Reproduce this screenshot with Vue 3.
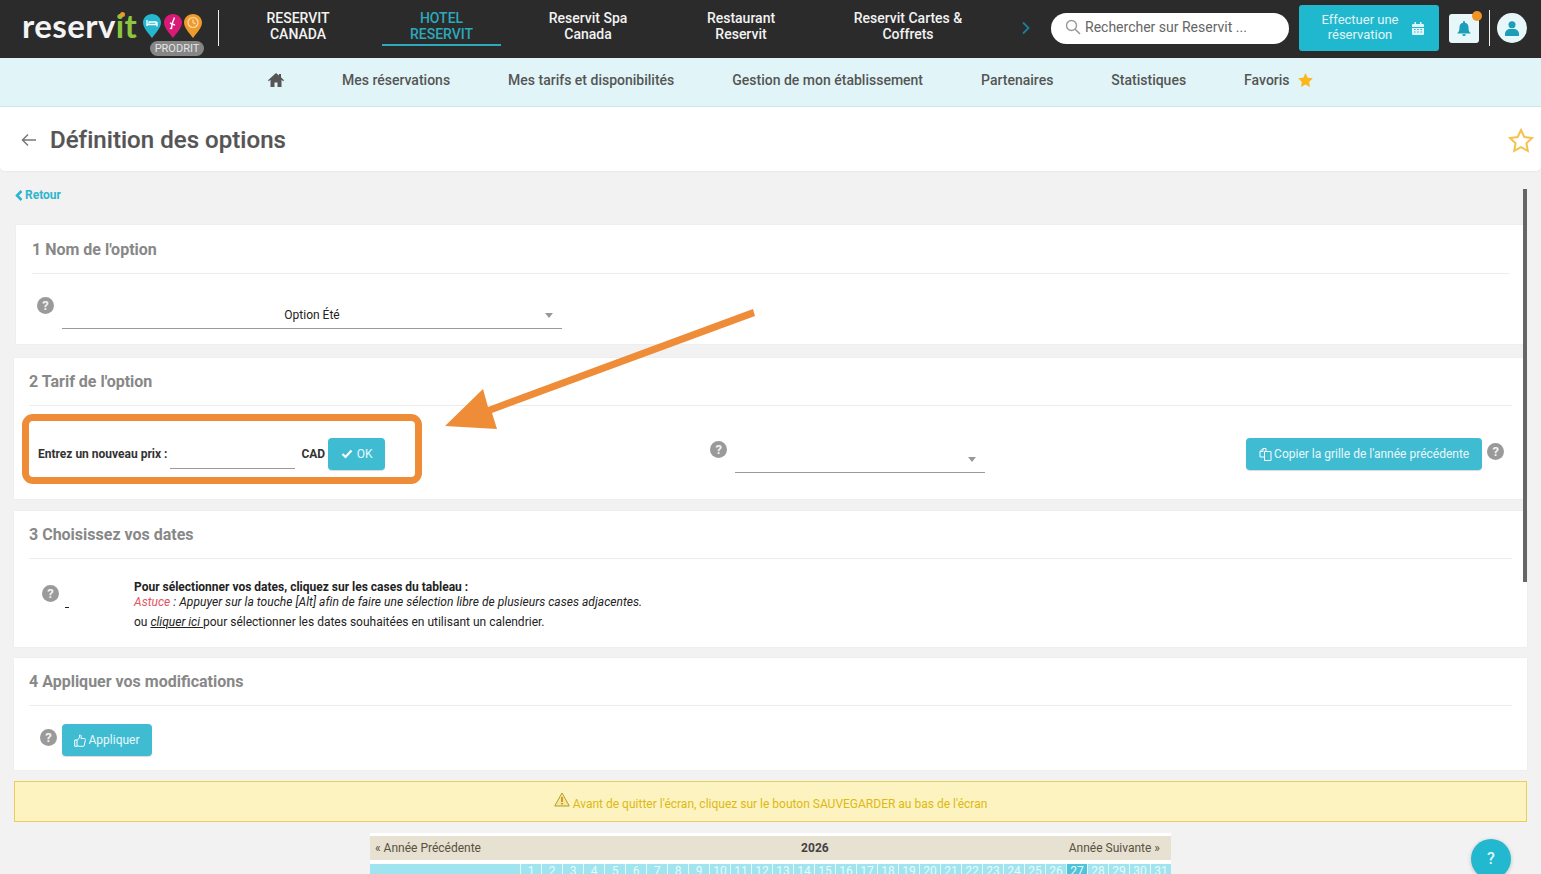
<script setup>
const topItems = [
  { lines: ['RESERVIT', 'CANADA'], w: 120 },
  { lines: ['HOTEL', 'RESERVIT'], w: 119, active: true },
  { lines: ['Reservit Spa', 'Canada'], w: 126 },
  { lines: ['Restaurant', 'Reservit'], w: 132 },
  { lines: ['Reservit Cartes &', 'Coffrets'], w: 154 },
]
const subItems = ['Mes réservations', 'Mes tarifs et disponibilités', 'Gestion de mon établissement', 'Partenaires', 'Statistiques']
const days = Array.from({ length: 31 }, (_, i) => i + 1)
const pin = 'M9 0C4 0 0 3.8 0 8.6C0 14 5.6 19.4 9 24C12.4 19.4 18 14 18 8.6C18 3.8 14 0 9 0Z'
</script>

<template>
  <div class="page">
    <header class="top">
      <div class="logo">
        <span class="word">reserv<span class="it">it</span></span>
        <span class="idot"></span>
        <div class="pins">
          <svg width="18" height="24" viewBox="0 0 18 24"><path :d="pin" fill="#25b7cf"/><path d="M4 6v6M4 10.500h10M14 8v4.500M6 9.500V8h7v2" stroke="#fff" stroke-width="1.300" fill="none"/></svg>
          <svg width="18" height="24" viewBox="0 0 18 24"><path :d="pin" fill="#d91a76"/><path d="M10.500 3.500L8 10l-2-1M8 10l-.5 5M8 10l3 1M7.500 15L6 14" stroke="#fff" stroke-width="1.400" fill="none"/></svg>
          <svg width="18" height="24" viewBox="0 0 18 24"><path :d="pin" fill="#ef9a2d"/><circle cx="9" cy="8.500" r="5" stroke="#fbdcae" stroke-width="1.200" fill="none"/><path d="M9 5.500v3l2.500 1.500" stroke="#fbdcae" stroke-width="1.200" fill="none"/></svg>
        </div>
        <span class="pill">PRODRIT</span>
      </div>
      <span class="vline"></span>
      <nav class="topnav">
        <a v-for="item in topItems" :key="item.lines[0]" class="topitem" :class="{ active: item.active }" :style="{ width: item.w + 'px' }">
          <span v-for="l in item.lines" :key="l">{{ l }}</span>
        </a>
      </nav>
      <svg class="chev" width="10" height="14" viewBox="0 0 10 14"><path d="M2 1.500L7.500 7L2 12.500" stroke="#1f7f9b" stroke-width="1.800" fill="none"/></svg>
      <div class="search">
        <svg width="16" height="16" viewBox="0 0 16 16"><circle cx="6.500" cy="6.500" r="5" stroke="#999" stroke-width="1.400" fill="none"/><path d="M10.200 10.200L15 15" stroke="#999" stroke-width="1.600"/></svg>
        <span>Rechercher sur Reservit ...</span>
      </div>
      <button class="book">
        <span class="booktext">Effectuer une<br>réservation</span>
        <svg width="12" height="13" viewBox="0 0 12 13"><path d="M1 2h10a1 1 0 0 1 1 1v2H0V3a1 1 0 0 1 1-1zM0 6h12v6a1 1 0 0 1-1 1H1a1 1 0 0 1-1-1zM2.500 0h1.500v3H2.500zM8 0h1.500v3H8z" fill="#e1f5f8"/><path d="M2 7.500h1.500M5.200 7.500h1.500M8.500 7.500H10M2 10h1.500M5.200 10h1.500M8.500 10H10" stroke="#20b8ce" stroke-width="1.200"/></svg>
      </button>
      <div class="bell">
        <svg width="14" height="15" viewBox="0 0 14 15"><path d="M7 0a1 1 0 0 1 1 1v.7A4.500 4.500 0 0 1 11.500 6c0 4 1 5 2 6v.5H.5V12c1-1 2-2 2-6A4.500 4.500 0 0 1 6 1.700V1a1 1 0 0 1 1-1zM5.200 13.300h3.600a1.800 1.800 0 0 1-3.600 0z" fill="#1c9db8"/></svg>
        <span class="dot"></span>
      </div>
      <span class="vline second"></span>
      <div class="avatar">
        <svg width="14" height="15" viewBox="0 0 14 15"><circle cx="7" cy="3.800" r="3.500" fill="#1c9db8"/><path d="M0 15v-2c0-3 2.500-5 5-5h4c2.500 0 5 2 5 5v2z" fill="#1c9db8"/></svg>
      </div>
    </header>

    <nav class="subnav">
      <svg width="16" height="14" viewBox="0 0 16 14"><path d="M8 0L0 7.200l.9 1L2.500 6.800V14h4V9.500h3V14h4V6.800l1.600 1.400.9-1L13 4.300V1h-2v1.500z" fill="#555"/></svg>
      <a v-for="s in subItems" :key="s">{{ s }}</a>
      <a class="fav">Favoris
        <svg width="15" height="14" viewBox="0 0 24 23"><path d="M12 0l3.700 7.600 8.300 1.200-6 5.800 1.400 8.300L12 19l-7.400 3.900L6 14.600 0 8.800l8.300-1.200z" fill="#fbb81c"/></svg>
      </a>
    </nav>

    <div class="titlebar">
      <svg width="16" height="14" viewBox="0 0 16 14"><path d="M15 7H2M7 1.500L1.500 7L7 12.500" stroke="#777" stroke-width="1.500" fill="none"/></svg>
      <h1>Définition des options</h1>
      <svg class="bigstar" width="26" height="25" viewBox="0 0 26 25"><path d="M13 2l3.300 7 7.700 1-5.600 5.300 1.400 7.600L13 19.200l-6.800 3.700 1.400-7.600L2 10l7.700-1z" stroke="#f6c24e" stroke-width="2" fill="none"/></svg>
    </div>

    <main class="content">
      <a class="back">
        <svg width="8" height="11" viewBox="0 0 8 11"><path d="M6.500 1L2 5.500l4.500 4.500" stroke="#25b7cf" stroke-width="2.500" fill="none"/></svg>
        Retour
      </a>

      <section class="card c1">
        <h2>1 Nom de l'option</h2>
        <div class="row r1">
          <span class="help">?</span>
          <div class="select s1"><span>Option Été</span><i class="caret"></i></div>
        </div>
      </section>

      <section class="card c2">
        <h2>2 Tarif de l'option</h2>
        <div class="row r2">
          <b class="lbl">Entrez un nouveau prix :</b>
          <span class="price"></span>
          <b class="cad">CAD</b>
          <button class="btn ok">
            <svg width="12" height="10" viewBox="0 0 12 10"><path d="M1.500 5l3 3 6-6.500" stroke="#fff" stroke-width="2.200" fill="none"/></svg>
            OK
          </button>
          <span class="help h2a">?</span>
          <div class="select s2"><i class="caret"></i></div>
          <button class="btn copy">
            <svg width="13" height="13" viewBox="0 0 13 13"><path d="M5.500 3.500h6.500v9H5.500zM5.500 9H1V3.500L4 .5h3v3M4 .5v3H1" stroke="#fff" stroke-width="1" fill="none"/></svg>
            Copier la grille de l'année précédente
          </button>
          <span class="help h2b">?</span>
        </div>
      </section>

      <section class="card c3">
        <h2>3 Choisissez vos dates</h2>
        <div class="row r3">
          <span class="help">?</span>
          <span class="mini"></span>
          <div class="howto">
            <b>Pour sélectionner vos dates, cliquez sur les cases du tableau :</b>
            <em class="tip"><span class="astuce">Astuce</span> : Appuyer sur la touche [Alt] afin de faire une sélection libre de plusieurs cases adjacentes.</em>
            <p>ou <em><u>cliquer ici </u></em>pour sélectionner les dates souhaitées en utilisant un calendrier.</p>
          </div>
        </div>
      </section>

      <section class="card c4">
        <h2>4 Appliquer vos modifications</h2>
        <div class="row r4">
          <span class="help">?</span>
          <button class="btn apply">
            <svg width="12" height="13" viewBox="0 0 12 13"><path d="M.7 6h2.300v6.300H.7zM3 6.500L5.500 3.500V1c1.500-.5 2 1 1.500 3.500h3.500c1 0 1 1 .8 1.800l-1 5c-.2.700-.6 1-1.300 1H5c-1 0-1.500-.5-2-.8" stroke="#fff" stroke-width="1" fill="none"/></svg>
            Appliquer
          </button>
        </div>
      </section>

      <div class="alert">
        <svg width="16" height="15" viewBox="0 0 16 15"><path d="M8 1L15.300 14H.7z" stroke="#b59a2a" stroke-width="1" fill="#f6e7a0"/><path d="M8 5v5M8 11v1.600" stroke="#d88f1a" stroke-width="1.800"/></svg>
        <span>Avant de quitter l'écran, cliquez sur le bouton SAUVEGARDER au bas de l'écran</span>
      </div>

      <div class="calendar">
        <div class="calhead">
          <span>« Année Précédente</span>
          <b>2026</b>
          <span>Année Suivante »</span>
        </div>
        <div class="calrow">
          <span class="callabel"></span>
          <span v-for="d in days" :key="d" class="day" :class="{ today: d === 27 }">{{ d }}</span>
        </div>
      </div>
    </main>

    <div class="focusbox"></div>
    <svg class="arrow" width="320" height="125" viewBox="0 0 320 125"><path d="M310 1L312 8L49 105L54 121L2 118L40 81L45 99Z" fill="#ee8c38"/></svg>
    <span class="scroll"></span>
    <span class="fab">?</span>
  </div>
</template>

<style>
html, body { margin: 0; overflow: hidden; }
</style>

<style scoped>
.page { position: relative; width: 1541px; height: 874px; overflow: hidden; background: #f2f2f2; font-family: Roboto, "Liberation Sans", sans-serif; color: #333; }
.top { height: 58px; background: #2b2b2b; display: flex; align-items: center; position: relative; }
.logo { position: relative; width: 218px; height: 58px; flex: none; }
.word { position: absolute; left: 22px; top: 3px; font: 700 33px/44px Lato, "Open Sans", sans-serif; letter-spacing: .4px; color: #f4f4f4; }
.it { color: #8cc63f; }
.idot { position: absolute; left: 120px; top: 12px; width: 5px; height: 5px; border-radius: 50%; background: #e89a2c; }
.pins { position: absolute; left: 143px; top: 14px; display: flex; gap: 2.500px; }
.pill { position: absolute; left: 150px; top: 41px; width: 54px; height: 15px; border-radius: 8px; background: #868686; color: #e4e4e4; font-size: 11px; line-height: 15px; text-align: center; }
.vline { width: 1px; height: 36px; margin-top: -2px; background: #f0f0f0; flex: none; }
.second { margin-left: 10px; }
.topnav { display: flex; gap: 24px; margin: -2px 0 0 19px; }
.topitem { display: flex; flex-direction: column; align-items: center; padding-bottom: 2px; color: #f2f2f2; font-size: 14px; font-weight: 500; line-height: 16px; border-bottom: 2px solid transparent; white-space: nowrap; flex: none; }
.topitem.active { color: #2ba9bd; border-bottom-color: #2ba9bd; }
.chev { margin-left: 36px; margin-top: -2px; flex: none; }
.search { width: 238px; height: 31px; margin: -1px 0 0 20px; box-sizing: border-box; padding: 0 0 3px 14px; border-radius: 16px; background: #fff; display: flex; align-items: center; gap: 4px; color: #666; font-size: 14px; flex: none; }
.book { width: 140px; height: 46px; margin: -2px 0 0 10px; border: 0; border-radius: 3px; background: #20b8ce; color: #e1f5f8; font: 400 13px/15px Roboto, sans-serif; display: flex; align-items: center; padding: 0 15px 0 16px; justify-content: space-between; flex: none; }
.booktext { width: 90px; text-align: center; margin-top: -3px; }
.bell { position: relative; width: 30px; height: 29px; margin: -2px 0 0 10px; border-radius: 3px; background: #e6f6f9; display: flex; align-items: center; justify-content: center; flex: none; }
.dot { position: absolute; right: -3px; top: -3px; width: 10px; height: 10px; border-radius: 50%; background: #ee9526; }
.avatar { width: 30px; height: 30px; margin: -2px 0 0 7px; border-radius: 50%; background: #e6f6f9; display: flex; align-items: center; justify-content: center; flex: none; }

.subnav { height: 44px; padding: 0 0 4px 268px; background: #e1f5f8; border-bottom: 1px solid #c9e8ee; display: flex; align-items: center; gap: 58px; color: #555; font-size: 14px; font-weight: 500; }
.fav { display: flex; align-items: center; gap: 8px; }
.titlebar { height: 62px; background: #fff; border-radius: 0 0 5px 5px; display: flex; align-items: center; padding: 2px 7px 0 21px; box-shadow: 0 1px 2px rgba(0,0,0,.04); }
.titlebar h1 { margin: 0 0 0 13px; font-size: 24px; font-weight: 500; letter-spacing: .05px; color: #555; flex: 1; -webkit-text-stroke: .2px #555; }
.content { padding: 16px 14px 0; }
.back { display: flex; align-items: center; gap: 2px; height: 16px; margin-left: 1px; color: #2eb6cd; font-size: 12px; font-weight: 700; }
.card { background: #fff; box-shadow: 0 0 2px rgba(0,0,0,.05); box-sizing: border-box; }
h2 { margin: 0; font-size: 16px; font-weight: 700; line-height: 20px; color: #888; padding: 14px 0 13px; border-bottom: 1px solid #ececec; }
.c1 { margin: 22px 1px 0 2px; height: 119px; padding: 0 17px 0 16px; }
.c1 h2 { padding-top: 15px; }
.c2 { margin-top: 14px; height: 141px; padding: 0 15px; }
.c3 { margin-top: 12px; height: 136px; padding: 0 15px; }
.c4 { margin-top: 11px; height: 112px; padding: 0 15px; }
.row { display: flex; }
.help { width: 17px; height: 17px; border-radius: 50%; background: #9a9a9a; color: #f2f2f2; font-size: 13px; font-weight: 700; line-height: 17px; text-align: center; flex: none; }
.select { position: relative; border-bottom: 1px solid #999; height: 14px; padding-bottom: 6px; display: flex; align-items: center; justify-content: center; font-size: 12px; color: #222; }
.caret { position: absolute; right: 9px; top: 5px; width: 0; height: 0; border: 4px solid transparent; border-top: 5px solid #999; border-bottom: 0; }
.r1 { padding: 23px 0 0 5px; }
.s1 { width: 500px; margin: 11px 0 0 8px; }
.r2 { padding-top: 32px; align-items: flex-start; }
.lbl, .cad { font-size: 12px; color: #333; margin-top: 9px; line-height: 14px; white-space: nowrap; }
.lbl { margin-left: 9px; }
.price { width: 125px; height: 31px; margin-left: 3px; border-bottom: 1px solid #999; flex: none; box-sizing: border-box; }
.cad { margin-left: 6px; }
.btn { border: 0; border-radius: 4px; background: #3fbcd2; color: #e9f8fb; font: 400 12px/14px Roboto, sans-serif; height: 32px; padding: 0; display: flex; align-items: center; justify-content: center; gap: 2px; flex: none; box-shadow: 0 1px 1px rgba(0,0,0,.15); white-space: nowrap; }
.ok { width: 57px; margin: 0 0 0 3px; gap: 4px; }
.h2a { margin: 3px 0 0 325px; }
.s2 { width: 250px; margin: 14px 0 0 8px; }
.copy { width: 236px; margin: 0 0 0 261px; }
.h2b { margin: 5px 0 0 5px; }
.r3 { padding: 26px 0 0 13px; }
.mini { width: 4px; height: 1px; margin: 22px 0 0 6px; background: #222; flex: none; }
.howto { margin: -5px 0 0 65px; font-size: 12px; line-height: 15px; color: #222; display: flex; flex-direction: column; }
.tip { letter-spacing: .04px; }
.howto p { margin: 5px 0 0; }
.astuce { color: #e2555f; }
.r4 { padding: 18px 0 0 11px; align-items: flex-start; }
.r4 .help { margin-top: 5px; }
.apply { width: 90px; margin-left: 5px; }
.alert { margin-top: 11px; height: 41px; box-sizing: border-box; background: #fdf3c0; border: 1px solid #e8cf5a; color: #dcb913; font-size: 12px; display: flex; align-items: center; justify-content: center; gap: 3px; padding-top: 5px; }
.alert svg { margin-top: -9px; }
.calendar { margin: 11px 356px 0; background: #fff; padding-top: 3px; width: 801px; }
.calhead { height: 24px; background: #e6e1d0; display: flex; align-items: center; justify-content: space-between; padding: 0 11px 0 5px; font-size: 12px; color: #5a5040; }
.calhead b { color: #444; margin-left: 80px; }
.calrow { display: flex; height: 30px; margin-top: 4px; }
.callabel { width: 150px; background: #9fe4ee; }
.day { width: 21px; background: #9fe4ee; border-left: 1px solid #e8f8fb; box-sizing: border-box; color: #eafafc; font-size: 12px; text-align: center; line-height: 15px; }
.day.today { background: #4fc3d9; }

.focusbox { position: absolute; left: 22px; top: 414px; width: 400px; height: 70px; box-sizing: border-box; border: 7px solid #ee8c38; border-radius: 11px; }
.arrow { position: absolute; left: 443px; top: 308px; }
.scroll { position: absolute; left: 1523px; top: 189px; width: 4px; height: 393px; background: #666; }
.fab { position: absolute; left: 1471px; top: 839px; width: 40px; height: 40px; border-radius: 50%; background: #22b8d0; color: #dff6fa; font-size: 16px; font-weight: 500; line-height: 40px; text-align: center; box-shadow: 0 1px 4px rgba(0,0,0,.2); }
</style>
